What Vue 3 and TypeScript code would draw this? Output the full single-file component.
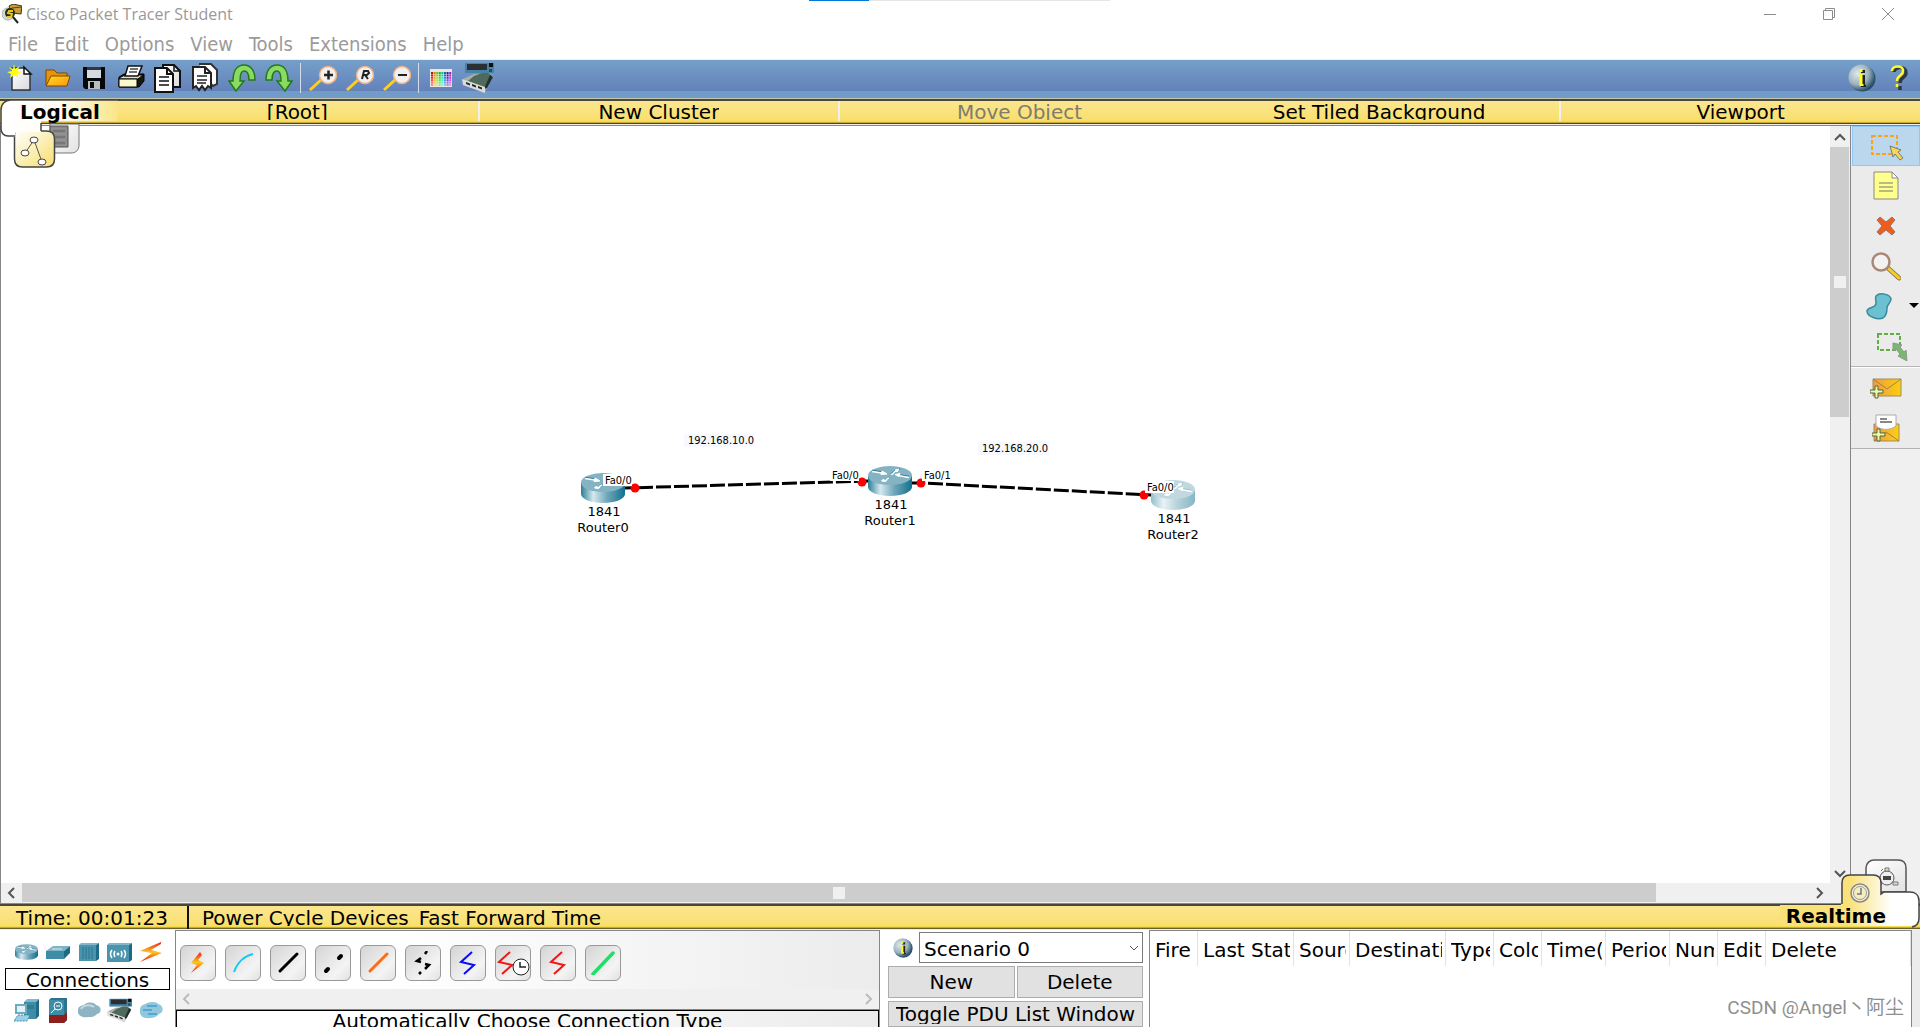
<script setup lang="ts">
import { ref } from 'vue'

interface RouterNode {
  name: string
  model: string
  x: number
  y: number
  dim: boolean
}

interface PortLabel {
  text: string
  x: number
  y: number
}

const menus = ['File', 'Edit', 'Options', 'View', 'Tools', 'Extensions', 'Help']

const routers: RouterNode[] = [
  { name: 'Router0', model: '1841', x: 580, y: 347, dim: false },
  { name: 'Router1', model: '1841', x: 867, y: 340, dim: false },
  { name: 'Router2', model: '1841', x: 1150, y: 354, dim: true },
]

const ports: PortLabel[] = [
  { text: 'Fa0/0', x: 604, y: 358 },
  { text: 'Fa0/0', x: 831, y: 353 },
  { text: 'Fa0/1', x: 923, y: 353 },
  { text: 'Fa0/0', x: 1146, y: 365 },
]

const notes: PortLabel[] = [
  { text: '192.168.10.0', x: 687, y: 318 },
  { text: '192.168.20.0', x: 981, y: 326 },
]

const lights = [
  [634, 362],
  [861, 356],
  [920, 357],
  [1143, 369],
]

const columns = [
  { label: 'Fire', width: 48 },
  { label: 'Last Status', width: 96 },
  { label: 'Source', width: 56 },
  { label: 'Destination', width: 96 },
  { label: 'Type', width: 48 },
  { label: 'Color', width: 48 },
  { label: 'Time(sec)', width: 64 },
  { label: 'Periodic', width: 64 },
  { label: 'Num', width: 48 },
  { label: 'Edit', width: 48 },
  { label: 'Delete', width: 0 },
]

const palette: string[] = []
for (let row = 0; row < 6; row++) {
  for (let col = 0; col < 8; col++) {
    palette.push(`hsl(${col * 42}, 80%, ${40 + row * 7}%)`)
  }
}

const scenario = ref('Scenario 0')
</script>

<template>
  <div class="window">
    <svg class="defs" width="0" height="0" aria-hidden="true">
      <defs>
        <linearGradient id="steel" x1="0" x2="1">
          <stop offset="0" stop-color="#2b7f98" />
          <stop offset=".28" stop-color="#d6e8ee" />
          <stop offset=".6" stop-color="#6ea6b9" />
          <stop offset="1" stop-color="#11718e" />
        </linearGradient>
        <linearGradient id="sheet" x1="0" x2="1" y2="1">
          <stop offset="0" stop-color="#fff" />
          <stop offset="1" stop-color="#d9dade" />
        </linearGradient>
        <linearGradient id="folder" x1="0" x2="1" y2="1">
          <stop offset="0" stop-color="#ffdc1a" />
          <stop offset="1" stop-color="#ff9414" />
        </linearGradient>
        <linearGradient id="mail" x1="0" x2="1">
          <stop offset="0" stop-color="#f09a40" />
          <stop offset="1" stop-color="#fcd010" />
        </linearGradient>
        <linearGradient id="bolt" x1="0" x2="0" y1="0" y2="1">
          <stop offset="0" stop-color="#ee2a1c" />
          <stop offset=".25" stop-color="#f66a1c" />
          <stop offset=".5" stop-color="#ffc81a" />
          <stop offset=".75" stop-color="#f66a1c" />
          <stop offset="1" stop-color="#ee2a1c" />
        </linearGradient>
        <radialGradient id="ball" cx=".35" cy=".35" r=".7">
          <stop offset="0" stop-color="#dfe8ec" />
          <stop offset=".6" stop-color="#9db3be" />
          <stop offset="1" stop-color="#24506a" />
        </radialGradient>
        <linearGradient id="tabFill" x1="0" x2="1">
          <stop offset="0" stop-color="#fff" />
          <stop offset=".5" stop-color="#fffdf4" />
          <stop offset="1" stop-color="#f9e587" />
        </linearGradient>
        <linearGradient id="tabIcon" x1="0" x2="1" y2="1">
          <stop offset="0" stop-color="#fff" />
          <stop offset=".3" stop-color="#fdf6d4" />
          <stop offset="1" stop-color="#f9dd6c" />
        </linearGradient>
        <linearGradient id="tabGrey" x1="0" x2="1" y2="1">
          <stop offset="0" stop-color="#fff" />
          <stop offset="1" stop-color="#e2e2e2" />
        </linearGradient>
        <linearGradient id="realFill" x1="0" x2="1">
          <stop offset="0" stop-color="#f9e17a" />
          <stop offset=".5" stop-color="#fae17a" />
          <stop offset=".8" stop-color="#fff" />
          <stop offset="1" stop-color="#fff" />
        </linearGradient>
      </defs>
      <symbol id="router" viewBox="0 0 44 30">
        <path d="M0 10v11c0 5 10 9 22 9s22-4 22-9V10z" fill="url(#steel)" />
        <ellipse cx="22" cy="9.500" rx="22" ry="9.500" fill="#84b3c3" />
        <g fill="#2f7d95" stroke="#2f7d95" stroke-width="1.500" transform="translate(0 -1)">
          <path d="M4 5.500l10 1.500M23 9l5-4 4-1M29 9.500l12 2M21 12l-2 2" />
        </g>
        <g fill="#fff" stroke="#fff" stroke-width="1.500">
          <path d="M4 5.500l10 1.500M23 8.500c3 0 2-3 5-3.500M30 9.500l11 2M21 12c-3 0-1 2-4 3" fill="none" />
          <path d="M14 5l5 3-6 .5zM27 4l4-1-2 3zM27 8.500l5-1-1 3zM13.500 15l2-2 2 2.500z" stroke-width="1" />
        </g>
      </symbol>
      <symbol id="info" viewBox="0 0 28 28">
        <circle cx="14.500" cy="14.500" r="13" fill="#2a5168" />
        <circle cx="13.500" cy="13.500" r="13" fill="url(#ball)" />
        <path d="M13 6h4v3h-4zM12 11h5v10h1v2h-5v-2h1v-8h-2z" fill="#222" />
        <path d="M11.500 5h3v3h-3zM10.500 10h4v10h1v2h-4v-2h0v-8h-1z" fill="#ffff28" />
      </symbol>
      <symbol id="device" viewBox="0 0 32 32">
        <path d="M3 1h29v10H3z" fill="#4584a6" />
        <path d="M5 2h20v6H5z" fill="#2a2f33" />
        <path d="M27 1h4v4h-4z" fill="#0b0c0e" />
        <path d="M27 7h3v3h-3z" fill="#314754" />
        <path d="M1 17l11-5 16 0 3 2-6 12-3 5z" fill="#a9afab" />
        <path d="M6 19l6-5 8-3h6l4 3-7 12z" fill="#4f6a5c" />
        <path d="M28 13l3 2-6 11-3 1z" fill="#20302a" />
        <path d="M0 17l23 8v6L1 23z" fill="#dadcd9" />
        <path d="M4 20l4 1.500v2l-4-1.500zM10 22l4 1.500v2L10 24zM16 24l4 1.500v2L16 26z" fill="#24282a" />
      </symbol>
      <symbol id="page" viewBox="0 0 28 30">
        <path d="M9 2h11l6 6v16H9z" fill="url(#sheet)" stroke="#111" stroke-width="2" />
        <path d="M20 2v6h6" fill="none" stroke="#111" stroke-width="1.500" />
      </symbol>
      <symbol id="plus" viewBox="0 0 14 14">
        <path d="M5 1h3v4h5v3H8v5H5V8H0V5h5z" fill="#eafab0" stroke="#55663c" />
      </symbol>
      <symbol id="zig" viewBox="0 0 24 24">
        <path d="M16 1L5 11l13 3L8 23" fill="none" stroke="currentColor" stroke-width="2" />
      </symbol>
    </svg>

    <header class="titlebar">
      <svg class="app-icon" viewBox="0 0 20 20" width="20" height="20">
        <path d="M7 2l4-2 9 2-1 8-9-1z" fill="#c89b3c" stroke="#3d3212" />
        <path d="M10 4l10-1" stroke="#5e4612" />
        <circle cx="6" cy="10" r="6" fill="#d4dccb" stroke="#aaa" />
        <circle cx="8" cy="9" r="5" fill="#1e2b14" />
        <path d="M11 7H7l-1 2 4 1-1 3H5" fill="none" stroke="#f5c513" stroke-width="2" />
        <path d="M11 13l5 6" stroke="#26261e" stroke-width="2" />
      </svg>
      <h1 class="title">Cisco Packet Tracer Student</h1>
      <div class="loading"><span class="loading-done"></span></div>
      <div class="caption-buttons">
        <button type="button" aria-label="Minimize">
          <svg width="14" height="14"><path d="M1 7.500h12" /></svg>
        </button>
        <button type="button" aria-label="Restore">
          <svg width="14" height="14"><path d="M1.500 3.500h9v9h-9zM3.500 3.500v-2h9v9h-2" /></svg>
        </button>
        <button type="button" aria-label="Close">
          <svg width="14" height="14"><path d="M1 1l12 12M13 1L1 13" /></svg>
        </button>
      </div>
    </header>

    <nav class="menubar">
      <button v-for="m in menus" :key="m" type="button">{{ m }}</button>
    </nav>

    <div class="toolbar">
      <button type="button" aria-label="New">
        <svg viewBox="0 0 28 30" width="28" height="30">
          <path d="M6 5h12l6 6v16H6z" fill="url(#sheet)" stroke="#33373c" stroke-width="1.500" />
          <path d="M18 4v7h7z" fill="#fff" stroke="#111" stroke-width="1.500" />
          <path d="M8 1l1 5 5-3-3 5 5 1-5 2 1 3-4-2-4 3 1-4-4-2 5-1-3-4 4 2z" fill="#ffff12" />
        </svg>
      </button>
      <button type="button" aria-label="Open">
        <svg viewBox="0 0 28 30" width="28" height="30">
          <path d="M3 22V7h8l3 3h10v3z" fill="#e8930e" stroke="#7b4a00" />
          <path d="M3 23L8 13h19l-3 10z" fill="url(#folder)" stroke="#7b4a00" />
        </svg>
      </button>
      <button type="button" aria-label="Save">
        <svg viewBox="0 0 28 30" width="28" height="30">
          <path d="M3 4h22v22H5l-2-2z" fill="#06070a" />
          <path d="M7 4h14v11H7z" fill="#d5dae0" />
          <path d="M7 4h14v3H7z" fill="#34383e" />
          <path d="M8 18h12v8H8z" fill="#b9bdc2" />
          <path d="M10 19h4v6h-4z" fill="#08090b" />
        </svg>
      </button>
      <button type="button" aria-label="Print">
        <svg viewBox="0 0 28 30" width="28" height="30">
          <path d="M2 14l5-3h20v7l-5 6H2z" fill="#16180f" stroke="#000" />
          <path d="M2 15l6-3h18l-5 4H2z" fill="#e9e7ba" stroke="#000" />
          <path d="M2 16h18v8H2z" fill="#fbf8cd" stroke="#000" />
          <path d="M8 13l3-10h14l-4 10z" fill="#fff" stroke="#111" stroke-width="1.500" />
          <path d="M13 6h8M12 9h8" stroke="#444" stroke-width="1.500" />
        </svg>
      </button>
      <button type="button" aria-label="Copy">
        <svg viewBox="0 0 28 30" width="28" height="30">
          <use href="#page" width="28" height="30" />
          <path d="M1 5h12l6 6v18H1z" fill="#fff" stroke="#111" stroke-width="2" />
          <path d="M13 5v6h6" fill="none" stroke="#111" stroke-width="2" />
          <path d="M5 14h10M5 18h10M5 22h10" stroke="#111" stroke-width="1.500" />
        </svg>
      </button>
      <button type="button" aria-label="Paste">
        <svg viewBox="0 0 28 30" width="28" height="30">
          <path d="M8 1h12l6 6v14l-4 2-3-3" fill="#fff" stroke="#333" stroke-width="2" />
          <path d="M2 4h12l6 6v15l-3-2-3 4-3-4-3 4-3-4-3 2z" fill="#fff" stroke="#222" stroke-width="2" />
          <path d="M14 4v6h6" fill="none" stroke="#222" stroke-width="2" />
          <path d="M6 13h10M6 17h10M6 20h9" stroke="#222" stroke-width="1.500" />
        </svg>
      </button>
      <button type="button" aria-label="Undo">
        <svg viewBox="0 0 28 30" width="28" height="30">
          <path class="turn" d="M27 17h-6c0-6-2-9-5-9s-4 4-4 10h4L8 28 1 18h4C5 8 9 2 16 2s11 6 11 15z" />
        </svg>
      </button>
      <button type="button" aria-label="Redo">
        <svg viewBox="0 0 28 30" width="28" height="30">
          <path class="turn" d="M1 17h6c0-6 2-9 5-9s4 4 4 10h-4l8 10 7-10h-4c0-10-4-16-11-16S1 8 1 17z" />
        </svg>
      </button>
      <span class="tool-sep"></span>
      <button type="button" aria-label="Zoom In">
        <svg viewBox="0 0 28 28" width="28" height="28">
          <path d="M1 26L13 15" stroke="#ffcf1c" stroke-width="3" />
          <circle cx="19" cy="11" r="8.500" fill="#f2f0ef" stroke="#eeb085" stroke-width="1.500" />
          <path d="M15 11h9M19.500 6.500v9" stroke="#222" stroke-width="2.500" />
        </svg>
      </button>
      <button type="button" aria-label="Zoom Reset">
        <svg viewBox="0 0 28 28" width="28" height="28">
          <path d="M1 26L13 15" stroke="#ffcf1c" stroke-width="3" />
          <circle cx="19" cy="11" r="8.500" fill="#f2f0ef" stroke="#eeb085" stroke-width="1.500" />
          <path d="M16 15l2-8h4l1 2-2 2h-4M19 11l3 4" fill="none" stroke="#222" stroke-width="2" />
        </svg>
      </button>
      <button type="button" aria-label="Zoom Out">
        <svg viewBox="0 0 28 28" width="28" height="28">
          <path d="M1 26L13 15" stroke="#ffcf1c" stroke-width="3" />
          <circle cx="19" cy="11" r="8.500" fill="#f2f0ef" stroke="#eeb085" stroke-width="1.500" />
          <path d="M15 11h9" stroke="#222" stroke-width="2" />
        </svg>
      </button>
      <span class="tool-sep"></span>
      <button type="button" aria-label="Drawing Palette">
        <svg viewBox="0 0 22 18" width="22" height="18">
          <path d="M0 0h22v18H0z" fill="#ece6df" />
          <rect
            v-for="(c, i) in palette"
            :key="i"
            :x="1 + (i % 8) * 2.6"
            :y="3 + Math.floor(i / 8) * 2.4"
            width="2"
            height="2"
            :fill="c"
          />
        </svg>
      </button>
      <button type="button" aria-label="Custom Devices">
        <svg width="32" height="32"><use href="#device" /></svg>
      </button>
      <span class="grow"></span>
      <button type="button" aria-label="Info">
        <svg width="28" height="28"><use href="#info" /></svg>
      </button>
      <button type="button" aria-label="Contents">
        <svg viewBox="0 0 20 26" width="20" height="26">
          <path d="M5 7c0-6 13-6 12 1 0 5-6 4-6 10M11 21v4" fill="none" stroke="#303848" stroke-width="3.500" />
          <path d="M3 6c0-6 12-6 11 0 0 5-6 4-6 10M8 19v3" fill="none" stroke="#fffb2a" stroke-width="2.500" />
        </svg>
      </button>
    </div>

    <div class="workspace-bar">
      <div class="logical-tab">
        <svg viewBox="0 0 120 74" width="120" height="74">
          <path d="M50 25h29v21c0 5-3 8-8 8H50z" fill="url(#tabGrey)" stroke="#777" />
          <path d="M50 27h18v21H50z" fill="#8a8a8a" stroke="#555" />
          <path d="M52 30h14v4H52zM52 36h14v4H52zM52 42h14v4H52z" fill="#777" stroke="#9c9c9c" />
          <path d="M14.500 32h32c5 0 8 3 8 8v20c0 5-3 8-8 8h-24c-5 0-8-3-8-8z" fill="url(#tabIcon)" stroke="#444" stroke-width="1.500" />
          <path d="M118 22H41v11H15v5H8c-4 0-7-3-7-7V11c0-6 4-10 10-10h107z" fill="url(#tabFill)" />
          <path d="M41 24v8M15 37H8c-4 0-7-3-7-7V11c0-6 4-10 10-10h108" fill="none" stroke="#444" stroke-width="1.500" />
          <path d="M34 41L25 54M34 41l8 22" stroke="#555" />
          <ellipse cx="34" cy="41" rx="4" ry="3" class="dot" />
          <ellipse cx="25" cy="54" rx="4" ry="3" class="dot" />
          <ellipse cx="42" cy="63" rx="4" ry="3" class="dot" />
        </svg>
        <button type="button" class="logical-label">Logical</button>
      </div>
      <span class="bar-lead"></span>
      <button type="button" class="bar-cell"><span>[Root]</span></button>
      <button type="button" class="bar-cell ruled"><span>New Cluster</span></button>
      <button type="button" class="bar-cell ruled" disabled><span>Move Object</span></button>
      <button type="button" class="bar-cell"><span>Set Tiled Background</span></button>
      <button type="button" class="bar-cell ruled"><span>Viewport</span></button>
    </div>

    <main class="work">
      <div class="canvas-area">
        <div class="canvas">
          <svg class="topology" width="100%" height="100%">
            <g stroke="#000" stroke-width="3" fill="none">
              <path d="M624 362L867 355" stroke-dasharray="15 3" stroke-dashoffset="5" />
              <path d="M911 357h10L1150 369" stroke-dasharray="15 3" stroke-dashoffset="2" />
            </g>
            <g v-for="r in routers" :key="r.name">
              <use href="#router" :x="r.x" :y="r.y" width="44" height="30" :opacity="r.dim ? 0.5 : 1" />
              <text class="node-text" :x="r.x + 23" :y="r.y + 43">{{ r.model }}</text>
              <text class="node-text" :x="r.x + 22" :y="r.y + 59">{{ r.name }}</text>
            </g>
            <circle v-for="(l, i) in lights" :key="i" :cx="l[0]" :cy="l[1]" r="4.500" fill="#f00" />
            <g v-for="(p, i) in ports" :key="'p' + i">
              <rect :x="p.x - 2" :y="p.y - 10" width="29" height="12" fill="#fff" />
              <text class="port-text" :x="p.x" :y="p.y">{{ p.text }}</text>
            </g>
            <g v-for="n in notes" :key="n.text">
              <rect :x="n.x - 4" :y="n.y - 10" width="71" height="13" fill="#f8f8ff" />
              <text class="port-text" :x="n.x" :y="n.y">{{ n.text }}</text>
            </g>
          </svg>
        </div>
        <div class="vscroll">
          <button type="button" aria-label="Scroll up"><svg width="12" height="12"><path d="M1 9l5-5 5 5" /></svg></button>
          <div class="vthumb"><i></i></div>
          <span class="grow"></span>
          <button type="button" aria-label="Scroll down"><svg width="12" height="12"><path d="M1 4l5 5 5-5" /></svg></button>
        </div>
        <div class="hscroll">
          <button type="button" aria-label="Scroll left"><svg width="12" height="12"><path d="M8 1L3 6l5 5" /></svg></button>
          <div class="htrack"><div class="hthumb"><i></i></div></div>
          <button type="button" aria-label="Scroll right"><svg width="12" height="12"><path d="M3 1l5 5-5 5" /></svg></button>
        </div>
      </div>

      <aside class="side">
        <div class="side-group">
          <button type="button" class="active" aria-label="Select">
            <svg viewBox="0 0 40 32" width="40" height="32">
              <path d="M6 6h25v18H6z" fill="none" stroke="#faa21c" stroke-width="2" stroke-dasharray="4 2" />
              <path d="M24 16l11 4-3 2 5 6-3 2-5-6-2 3z" fill="#f5d65c" stroke="#7a7b72" />
            </svg>
          </button>
          <button type="button" aria-label="Place Note">
            <svg viewBox="0 0 26 30" width="26" height="30">
              <path d="M1 1h18l6 6v21H1z" fill="#ffff8c" stroke="#888" />
              <path d="M19 1v6h6z" fill="#fff" stroke="#888" />
              <path d="M6 12h14M6 16h14M6 20h14" stroke="#777" />
            </svg>
          </button>
          <button type="button" aria-label="Delete">
            <svg viewBox="0 0 20 20" width="20" height="20">
              <path d="M4 1l6 5 6-5 3 3-5 6 5 6-3 3-6-5-6 5-3-3 5-6-5-6z" fill="#f25b1c" stroke="#8c7b70" stroke-linejoin="round" />
            </svg>
          </button>
          <button type="button" aria-label="Inspect">
            <svg viewBox="0 0 30 30" width="30" height="30">
              <path d="M18 18l10 9" stroke="#8f8262" stroke-width="5" stroke-linecap="round" />
              <path d="M18 18l10 9" stroke="#fccd1c" stroke-width="3" stroke-linecap="round" />
              <circle cx="10" cy="11" r="8.500" fill="#f2f2f2" stroke="#a88876" stroke-width="2.500" />
            </svg>
          </button>
          <button type="button" class="shape" aria-label="Draw Shape">
            <svg viewBox="0 0 26 28" width="26" height="28">
              <path d="M10 4c4-4 14-2 15 3 0 4-4 5-4 9s-1 8-4 10C12 28 1 25 1 19c1-5 9-2 9-8 0-3-1-5 0-7z" fill="#6bc1d1" stroke="#3a8a9b" stroke-width="1.500" />
            </svg>
            <svg class="caret" viewBox="0 0 10 6" width="10" height="6"><path d="M0 0h10L5 5z" /></svg>
          </button>
          <button type="button" class="resize" aria-label="Resize Shape">
            <svg viewBox="0 0 32 30" width="32" height="30">
              <path d="M2 3h22v16H2z" fill="none" stroke="#63ad45" stroke-width="2" stroke-dasharray="4 2" />
              <path d="M17 12l9 2-2 2 4 5 2-2 1 11-9-5 2-2-4-5-3 2z" fill="#7bb772" stroke="#8b9a88" />
            </svg>
          </button>
        </div>
        <div class="side-group">
          <button type="button" aria-label="Add Simple PDU">
            <svg viewBox="0 0 32 22" width="32" height="22">
              <path d="M3 2h28v17H3z" fill="url(#mail)" stroke="#a08c5c" />
              <path d="M3 2l14 10L31 2" fill="none" stroke="#a4814a" />
              <use href="#plus" x="0" y="8" width="14" height="14" />
            </svg>
          </button>
          <button type="button" aria-label="Add Complex PDU">
            <svg viewBox="0 0 30 30" width="30" height="30">
              <path d="M3 11h25v17H3z" fill="url(#mail)" stroke="#a08c5c" />
              <path d="M5 2h20v11c-5 4-14 5-20 0z" fill="#fff" stroke="#aaa" />
              <path d="M9 6h7M9 9h12" stroke="#888" stroke-width="2" />
              <path d="M3 28l12-9 13 9" fill="none" stroke="#a4814a" />
              <use href="#plus" x="1" y="15" width="14" height="14" />
            </svg>
          </button>
        </div>
      </aside>
    </main>

    <div class="time-bar">
      <span class="time">Time: 00:01:23</span>
      <button type="button" class="power"><span>Power Cycle Devices</span></button>
      <button type="button" class="power"><span>Fast Forward Time</span></button>
      <div class="realtime-tab">
        <svg viewBox="0 0 140 72" width="140" height="72">
          <path d="M86 34V10c0-5 4-8 8-8h24c5 0 8 3 8 8v24z" fill="url(#tabGrey)" stroke="#555" stroke-width="1.500" />
          <circle cx="107" cy="20" r="7" fill="#eee" stroke="#555" />
          <path d="M103 18h8v4h-8z" fill="#444" />
          <path d="M105 10h4v3h-4zM101 13l2-2M97 26h5M113 24h5v3h-5z" fill="#ddd" stroke="#777" />
          <path d="M0 68V47h61V25c0-5 3-8 8-8h24c5 0 8 3 8 8v12l3-3h26c5 0 9 3 9 9v16c0 5-4 9-9 9z" fill="url(#realFill)" />
          <path d="M62 46V25c0-5 3-8 8-8h23c5 0 8 3 8 8v11l3-2h26c5 0 9 3 9 9v17c0 5-2 8-7 9" fill="none" stroke="#444" stroke-width="1.500" />
          <circle cx="80" cy="35" r="9" fill="#f6f0d8" stroke="#888" stroke-width="1.500" />
          <circle cx="80" cy="35" r="6.500" fill="#f7eebf" stroke="#999" />
          <path d="M81 30v6h-4" fill="none" stroke="#777" stroke-width="1.500" />
        </svg>
        <button type="button" class="realtime-label">Realtime</button>
      </div>
    </div>

    <footer class="bottom">
      <section class="devices">
        <div class="device-row">
          <svg width="23" height="16"><use href="#router" width="23" height="16" /></svg>
          <svg viewBox="0 0 24 13" width="24" height="13">
            <path d="M0 5h18v8H0z" fill="#3f8ca6" /><path d="M0 5l7-5h17l-6 5z" fill="#7db5c6" /><path d="M18 5l6-5v7l-6 6z" fill="#1f6b85" />
            <path d="M6 3h10" stroke="#dcecf1" />
          </svg>
          <svg viewBox="0 0 20 18" width="20" height="18">
            <path d="M0 2h17v16H0z" fill="#4a94ad" /><path d="M0 2l2-2h18l-3 2z" fill="#82b8c9" /><path d="M17 2l3-2v16l-3 2z" fill="#1f6b85" />
            <path d="M4 4v12M7 4v12M10 4v12M13 4v12" stroke="#2b7690" />
          </svg>
          <svg viewBox="0 0 25 19" width="25" height="19">
            <path d="M0 2h22v17H0z" fill="#4a94ad" /><path d="M0 2l2-2h23l-3 2z" fill="#82b8c9" /><path d="M22 2l3-2v17l-3 2z" fill="#1f6b85" />
            <path d="M5 7q-3 4 0 8M8 8q-2 3 0 6M17 7q3 4 0 8M14 8q2 3 0 6" fill="none" stroke="#fff" stroke-width="1.500" /><circle cx="11" cy="11" r="1.500" fill="#fff" />
          </svg>
          <svg viewBox="0 0 24 20" width="24" height="20">
            <path d="M22 0L1 9l12 2L1 20l22-9-11-3L22 2z" fill="url(#bolt)" />
          </svg>
        </div>
        <div class="device-label">Connections</div>
        <div class="device-row">
          <svg viewBox="0 0 25 23" width="25" height="23">
            <path d="M10 3l3-3h12l-3 3z" fill="#82b8c9" /><path d="M10 3h12v17H10z" fill="#3f8ca6" /><path d="M22 3l3-3v17l-3 3z" fill="#1f6b85" />
            <path d="M12 7h8M12 9h8" stroke="#256c84" />
            <path d="M1 5h12v10H1z" fill="#6cabc0" /><path d="M3 7h8v6H3z" fill="#e4f1f5" />
            <path d="M4 16h12l-3 6H0z" fill="#9bd0e5" stroke="#3e8eab" stroke-dasharray="2 1" />
          </svg>
          <svg viewBox="0 0 18 25" width="18" height="25">
            <path d="M0 2l2-2h16v22l-3 3H0z" fill="#2b7490" /><path d="M0 2h15v15H0z" fill="#3f8ca6" />
            <path d="M0 17h15v8H0zM15 17l3-3v8l-3 3z" fill="#8d201c" />
            <circle cx="9" cy="8" r="4" fill="none" stroke="#fff" /><path d="M6 11l-4 4M7 8h4" stroke="#fff" />
          </svg>
          <svg viewBox="0 0 24 16" width="24" height="16">
            <path d="M1 8c0-5 5-4 7-6 5-3 10-1 11 1 6 1 6 8 1 9-3 4-8 3-9 3-5 1-11-1-10-7z" fill="#8eb3c3" />
            <path d="M4 7c2-4 9-5 13-2" fill="none" stroke="#c6dbe3" stroke-width="2" />
          </svg>
          <svg width="25" height="25"><use href="#device" width="25" height="25" /></svg>
          <svg viewBox="0 0 24 18" width="24" height="18">
            <path d="M1 9c0-6 5-5 7-7 5-2 10-1 11 1 6 1 6 9 1 10-3 4-8 4-9 4-5 1-11-1-10-8z" fill="#90c7dc" />
            <path d="M8 5h10M4 9h9M9 13h9" stroke="#3fa0cf" stroke-width="1.500" />
          </svg>
        </div>
      </section>

      <section class="connections">
        <div class="cable-row">
          <button type="button" aria-label="Automatic">
            <svg viewBox="0 0 24 24"><path d="M14 1L5 12l6 2-6 8 13-10-6-3 4-5z" fill="url(#bolt)" /></svg>
          </button>
          <button type="button" aria-label="Console">
            <svg viewBox="0 0 24 24"><path d="M3 21C6 12 13 5 22 3" fill="none" stroke="#1cc6f8" stroke-width="2" /></svg>
          </button>
          <button type="button" aria-label="Copper Straight-Through">
            <svg viewBox="0 0 24 24"><path d="M4 20L21 3" stroke="#000" stroke-width="3" stroke-linecap="round" /></svg>
          </button>
          <button type="button" aria-label="Copper Cross-Over">
            <svg viewBox="0 0 24 24"><path d="M5 20l2-2M18 7l2-2" stroke="#000" stroke-width="4" stroke-linecap="round" /></svg>
          </button>
          <button type="button" aria-label="Fiber">
            <svg viewBox="0 0 24 24"><path d="M4 20L21 3" stroke="#ff6b13" stroke-width="3" stroke-linecap="round" /></svg>
          </button>
          <button type="button" aria-label="Phone">
            <svg viewBox="0 0 24 24"><path d="M16 0l-2 3M10 7l-4 3 4 1M14 13l4 1-4 4M10 21l-2 2" fill="none" stroke="#000" stroke-width="2.500" /></svg>
          </button>
          <button type="button" class="blue" aria-label="Coaxial"><svg><use href="#zig" /></svg></button>
          <button type="button" class="red clocked" aria-label="Serial DCE">
            <svg viewBox="0 0 34 28">
              <use href="#zig" x="-2" y="2" width="24" height="24" />
              <circle cx="25" cy="18" r="8" fill="#fff" stroke="#222" /><path d="M24 13v5h6" fill="none" stroke="#222" stroke-width="1.500" />
            </svg>
          </button>
          <button type="button" class="red" aria-label="Serial DTE"><svg><use href="#zig" /></svg></button>
          <button type="button" aria-label="Octal">
            <svg viewBox="0 0 24 24"><path d="M2 23L22 2" stroke="#1ee067" stroke-width="3.500" stroke-linecap="round" /></svg>
          </button>
        </div>
        <div class="cable-scroll">
          <svg width="12" height="12"><path d="M9 1L4 6l5 5" /></svg>
          <svg width="12" height="12"><path d="M4 1l5 5-5 5" /></svg>
        </div>
        <div class="cable-label">Automatically Choose Connection Type</div>
      </section>

      <section class="scenario">
        <div class="scenario-top">
          <svg width="20" height="20"><use href="#info" /></svg>
          <div class="select-wrap">
            <select v-model="scenario" aria-label="Scenario">
              <option>Scenario 0</option>
            </select>
            <svg width="10" height="8"><path d="M1 2l4 4 4-4" /></svg>
          </div>
        </div>
        <div class="scenario-buttons">
          <button type="button">New</button>
          <button type="button">Delete</button>
        </div>
        <button type="button" class="toggle"><span>Toggle PDU List Window</span></button>
      </section>

      <section class="pdu">
        <table>
          <colgroup>
            <col v-for="c in columns" :key="c.label" :style="c.width ? { width: c.width + 'px' } : {}" />
          </colgroup>
          <thead>
            <tr>
              <th v-for="c in columns" :key="c.label" scope="col"><div>{{ c.label }}</div></th>
            </tr>
          </thead>
        </table>
      </section>
    </footer>
    <div class="watermark">CSDN @Angel丶阿尘</div>
  </div>
</template>

<style>
body {
  margin: 0;
  overflow: hidden;
}
</style>

<style scoped>
.window {
  position: relative;
  display: flex;
  flex-direction: column;
  height: 100vh;
  overflow: hidden;
  background: #fff;
  color: #000;
  font-family: 'DejaVu Sans', sans-serif;
  font-size: 20px;
}
.window * {
  box-sizing: border-box;
}
.defs {
  position: absolute;
}
button {
  display: flex;
  align-items: center;
  justify-content: center;
  margin: 0;
  padding: 0;
  border: 0;
  background: none;
  color: inherit;
  font: inherit;
}
svg {
  display: block;
  flex: none;
}
.grow {
  flex: 1;
}

.titlebar {
  position: relative;
  display: flex;
  align-items: center;
  flex: none;
  height: 28px;
  padding: 0 3px 0 2px;
}
.title {
  flex: 1;
  margin: 0 0 0 4px;
  color: #999;
  font: 400 16px/28px 'Open Sans', sans-serif;
}
.loading {
  position: absolute;
  top: 0;
  left: 809px;
  width: 301px;
  height: 1px;
  background: #e5e5e5;
}
.loading-done {
  display: block;
  width: 60px;
  height: 1px;
  background: #0078d7;
}
.caption-buttons {
  display: flex;
}
.caption-buttons button {
  width: 59px;
  height: 28px;
}
.caption-buttons path {
  fill: none;
  stroke: #8c8c8c;
}

.menubar {
  display: flex;
  flex: none;
  gap: 16px;
  height: 32px;
  padding: 0 8px;
  border-bottom: 1px solid #f0f0f0;
  color: #9b9b9b;
  font-family: 'DejaVu Sans Condensed', 'DejaVu Sans', sans-serif;
  line-height: 32px;
}

.toolbar {
  display: flex;
  align-items: center;
  flex: none;
  height: 39px;
  padding: 0 3px 2px 1px;
  border-bottom: 1px solid #c6c6ae;
  background: linear-gradient(#759fca, #6382ba 31px, #719bc9 31px);
}
.toolbar button {
  width: 37px;
  height: 32px;
}
.tool-sep {
  width: 7px;
  height: 30px;
  background: linear-gradient(90deg, transparent 3px, #d4dce8 3px, #d4dce8 4px, transparent 4px);
}
.turn {
  fill: #8cda64;
  stroke: #217a1c;
  stroke-width: 1.5;
}

.workspace-bar {
  position: relative;
  z-index: 2;
  display: grid;
  grid-template-columns: 117px repeat(5, 1fr);
  flex: none;
  height: 27px;
  padding-top: 2px;
  background: linear-gradient(#47473c 2px, #fbe68e 2px, #f9df70 21px, #f5dc4e 22px, #f5dc4e 23px, #c9a83a 23px, #c9a83a 24px, #4b4520 24px, #4b4520 25px, #eee 25px, #eee 26px, #85858a 26px);
}
.bar-cell {
  align-items: flex-start;
  height: 20px;
}
.bar-cell span {
  height: 19px;
  line-height: 22px;
  overflow: hidden;
}
.bar-cell.ruled {
  border-left: 2px solid #f2f0e8;
}
.bar-cell:disabled {
  color: #7f7b70;
}
.logical-tab {
  position: absolute;
  top: 0;
  left: 0;
}
.logical-label {
  position: absolute;
  top: 2px;
  left: 20px;
  font-weight: 700;
  line-height: 22px;
}
.dot {
  fill: #fff;
  stroke: #444;
}

.work {
  display: flex;
  flex: 1;
  min-height: 0;
}
.canvas-area {
  display: grid;
  flex: 1;
  grid-template: 1fr 20px / 1fr 20px;
  min-width: 0;
  border-right: 1px solid #85858a;
  border-left: 1px solid #85858a;
  background: #f0f0f0;
}
.canvas {
  min-height: 0;
  overflow: hidden;
  background: #fff;
}
.node-text {
  font-size: 13px;
  text-anchor: middle;
}
.port-text {
  font-family: 'DejaVu Sans Condensed', 'DejaVu Sans', sans-serif;
  font-size: 11px;
}
.vscroll {
  display: flex;
  flex-direction: column;
}
.vscroll button {
  height: 21px;
  padding-right: 1px;
}
.vthumb {
  display: grid;
  place-items: center;
  height: 270px;
  margin-right: 1px;
  background: #cdcdcd;
}
.vthumb i,
.hthumb i {
  width: 12px;
  height: 12px;
  background: #f0f0f0;
}
.vscroll path,
.hscroll path {
  fill: none;
  stroke: #555;
  stroke-width: 2;
}
.hscroll {
  display: flex;
}
.hscroll button {
  width: 21px;
}
.htrack {
  display: grid;
  flex: 1;
  grid-template-columns: 32fr 3fr;
}
.hthumb {
  display: grid;
  place-items: center;
  height: 19px;
  background: #cdcdcd;
}
.side {
  width: 69px;
  background: #f0f0f0;
}
.side-group {
  padding-left: 1px;
  border-bottom: 1px solid #b4b4b4;
  background: #ebebeb;
}
.side-group + .side-group {
  border-top: 1px solid #fff;
}
.side-group button {
  position: relative;
  width: 100%;
  height: 40px;
}
.side-group .active {
  border: 1px solid #90c8f6;
  background: #bad7ee;
}
.side-group .shape {
  padding-right: 15px;
}
.side-group .resize {
  padding-left: 11px;
}
.caret {
  position: absolute;
  right: 1px;
}

.time-bar {
  position: relative;
  z-index: 2;
  display: flex;
  flex: none;
  height: 27px;
  padding-top: 3px;
  background: linear-gradient(#8a8a90 1px, #47473c 1px, #47473c 3px, #fbe68e 3px, #f9df70 23px, #f5dc4e 23px, #f5dc4e 24px, #c9a83a 24px, #c9a83a 25px, #6b6128 25px, #6b6128 26px, #eee 26px);
}
.time {
  width: 189px;
  height: 23px;
  padding-left: 16px;
  border-right: 2px solid #111;
  line-height: 24px;
}
.power {
  align-items: flex-start;
  height: 20px;
  margin-left: 13px;
}
.power + .power {
  margin-left: 10px;
}
.power span {
  height: 20px;
  line-height: 24px;
  overflow: hidden;
}
.realtime-tab {
  position: absolute;
  right: 0;
  bottom: 0;
}
.realtime-label {
  position: absolute;
  right: 34px;
  bottom: 4px;
  font-weight: 700;
  line-height: 20px;
}

.bottom {
  display: grid;
  grid-template-columns: 175px 704fr 270px 771fr;
  flex: none;
  height: 97px;
  overflow: hidden;
}
.devices {
  padding: 8px 5px 0;
}
.device-row {
  display: grid;
  grid-template-columns: repeat(5, 31px);
  height: 30px;
  padding: 0 0 2px 6px;
  align-items: center;
  justify-items: center;
}
.device-label {
  height: 22px;
  border: 1px solid #000;
  line-height: 22px;
  text-align: center;
}
.device-label + .device-row {
  height: 42px;
}
.connections {
  border-top: 1px solid #85858a;
  border-left: 1px solid #85858a;
  background: linear-gradient(90deg, #fff 30%, #ececec);
}
.cable-row {
  display: flex;
  gap: 9px;
  height: 58px;
  padding: 14px 4px 8px;
}
.cable-row button {
  width: 36px;
  height: 36px;
  border: 1px solid #999;
  border-radius: 6px;
  background: linear-gradient(135deg, #d4d4d4, #f4f4f4 70%, #e2e2e2);
}
.cable-row svg {
  width: 24px;
  height: 24px;
}
.cable-row .clocked svg {
  width: 34px;
  height: 28px;
}
.blue {
  color: #0a0aff;
}
.red {
  color: #f41414;
}
.cable-scroll {
  display: flex;
  align-items: center;
  justify-content: space-between;
  height: 21px;
  padding: 0 5px 0 4px;
  border-bottom: 1px solid #85858a;
  background: #f0f0f0;
}
.cable-scroll path {
  fill: none;
  stroke: #bbb;
  stroke-width: 2;
}
.cable-label {
  border: 1px solid #000;
  line-height: 20px;
  text-align: center;
}
.scenario {
  display: flex;
  flex-direction: column;
  gap: 3px;
  padding: 2px 6px 0 8px;
  border-left: 1px solid #85858a;
}
.scenario-top {
  display: flex;
  align-items: center;
  gap: 6px;
  padding-left: 5px;
}
.select-wrap {
  position: relative;
  flex: 1;
}
select {
  display: block;
  width: 100%;
  height: 31px;
  padding: 2px 4px 0;
  border: 1px solid #7a7a7a;
  border-radius: 0;
  appearance: none;
  background: #fff;
  color: #000;
  font: inherit;
}
.select-wrap svg {
  position: absolute;
  top: 12px;
  right: 4px;
}
.select-wrap path {
  fill: none;
  stroke: #555;
}
.scenario-buttons {
  display: grid;
  grid-template-columns: 1fr 1fr;
  gap: 2px;
}
.scenario button {
  height: 32px;
  border: 1px solid #adadad;
  background: #e1e1e1;
}
.scenario .toggle {
  height: 26px;
}
.toggle span {
  height: 20px;
  line-height: 20px;
  overflow: hidden;
  white-space: nowrap;
}
.pdu {
  margin-right: 8px;
  border: 1px solid #85858a;
  border-bottom: 0;
  box-shadow: 8px 0 0 #ececec;
}
table {
  width: 100%;
  border-spacing: 0;
  table-layout: fixed;
}
th {
  height: 35px;
  padding: 2px 3px 0 5px;
  border-right: 1px solid #e2e2e2;
  font-weight: 400;
  text-align: left;
}
th div {
  overflow: hidden;
  white-space: nowrap;
}
.watermark {
  position: absolute;
  right: 16px;
  bottom: 4px;
  z-index: 3;
  color: #8f8f8f;
  font: 19px/30px 'Roboto', 'Noto Sans CJK SC', sans-serif;
}
</style>
